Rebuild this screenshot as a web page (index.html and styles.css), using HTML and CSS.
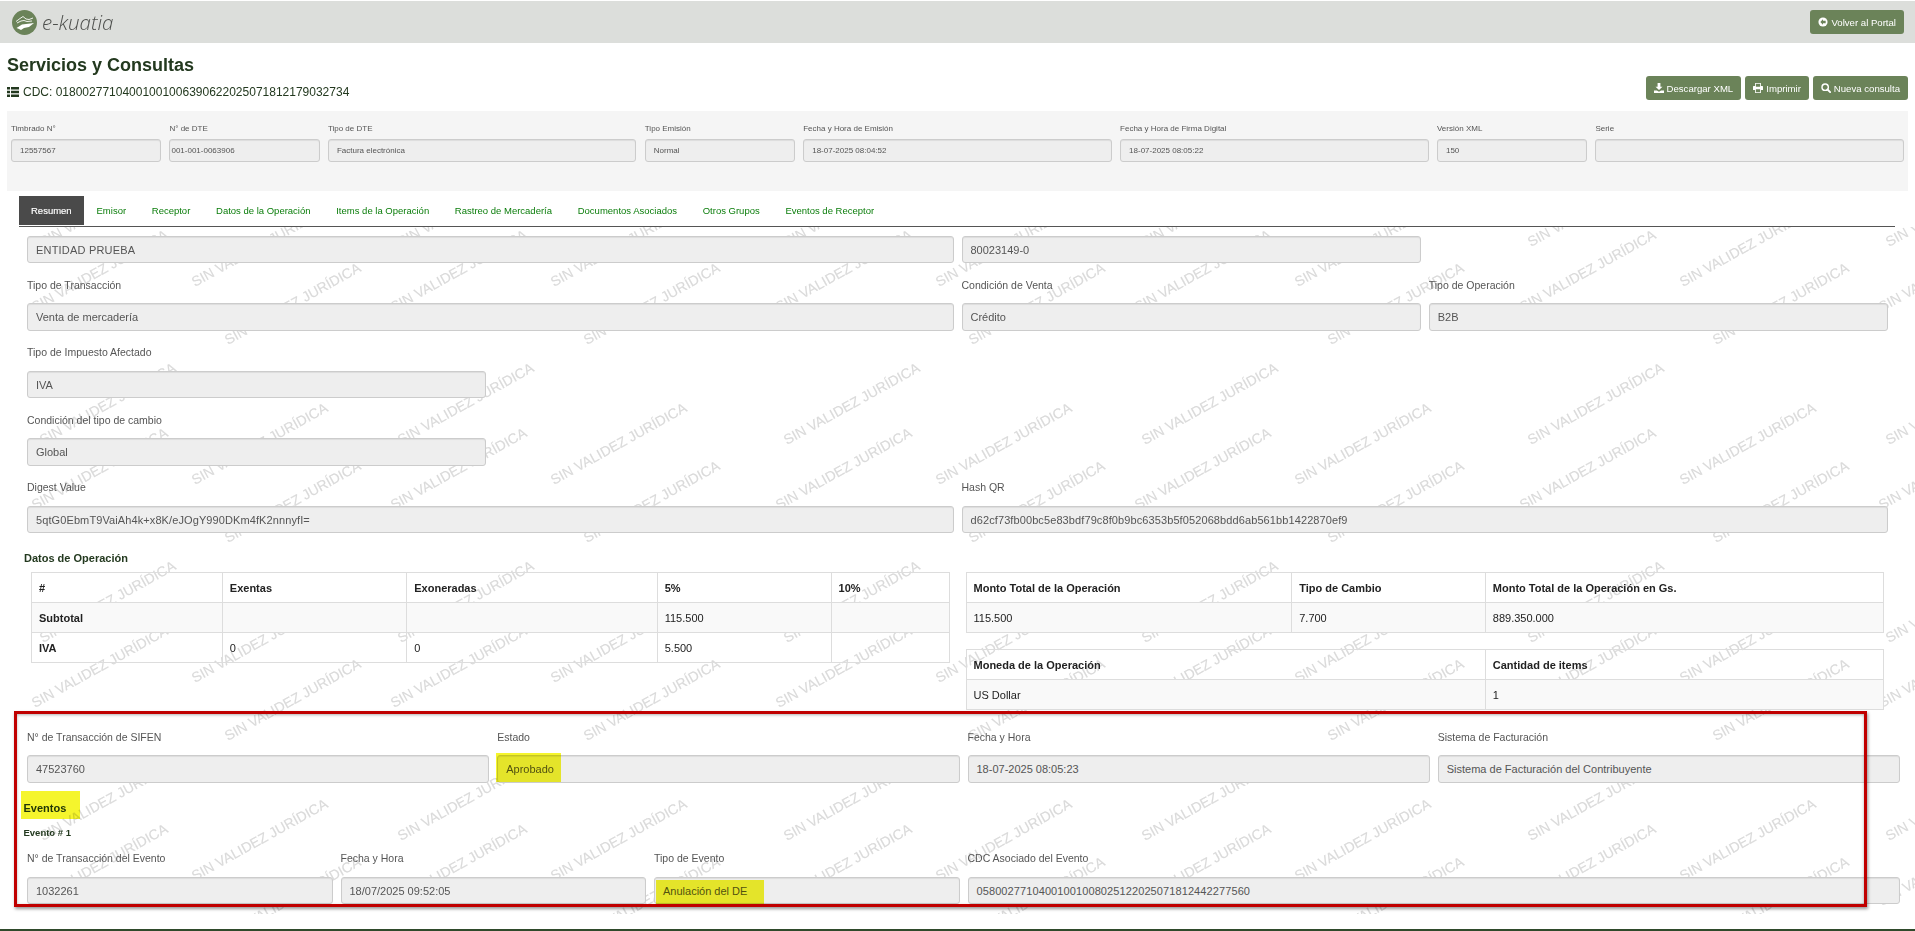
FILE: index.html
```html
<!DOCTYPE html>
<html lang="es">
<head>
<meta charset="utf-8">
<title>e-Kuatia</title>
<link rel="stylesheet" href="styles.css">
</head>
<body>
<header class="topbar">
  <div class="brand">
    <svg class="brand-mark" viewBox="0 0 25 25"><circle cx="12.500" cy="12.500" r="12.500" fill="#6b8359"/><path d="M4 11.500 8 8.500 11 6.500 14 9 17 9.500 21 8M5 13 9 11 12 10.500 15 11.500 20 11" fill="none" stroke="#fff" stroke-width=".9"/><path d="M4.500 18 10 14.500 22 13 17 17 12 18 9 20 7 19Z" fill="#fff"/></svg>
    <span class="brand-name">e-kuatia</span>
  </div>
  <a class="btn">
    <svg class="ico" viewBox="0 0 12 12"><circle cx="6" cy="6" r="5.500" fill="#fff"/><path d="M6 2.800 2.800 6 6 9.200V7.400h3.200V4.600H6Z" fill="#6b8359"/></svg>
    Volver al Portal
  </a>
</header>

<section class="page-head">
  <div class="page-titles">
    <h1 class="title">Servicios y Consultas</h1>
    <div class="cdc">
      <svg class="cdc-ico" viewBox="0 0 12 10"><path d="M0 0h3v2.600H0zM4 0h8v2.600H4zM0 3.700h3v2.600H0zM4 3.700h8v2.600H4zM0 7.400h3V10H0zM4 7.400h8V10H4z" fill="#23391f"/></svg>
      <span>CDC: 01800277104001001006390622025071812179032734</span>
    </div>
  </div>
  <div class="actions">
    <a class="btn">
      <svg class="ico" viewBox="0 0 12 12"><path d="M4.300 0h3.400v4.500h2.500L6 8.500 1.800 4.500h2.500ZM0 9h3.500L6 10.500 8.500 9H12v3H0Z" fill="#fff"/></svg>
      Descargar XML
    </a>
    <a class="btn">
      <svg class="ico" viewBox="0 0 12 12"><path fill-rule="evenodd" d="M2.500 0h7v3.500h1.700c.5 0 .8.400.8.800v4.200H9.500V12h-7V8.500H0V4.300c0-.4.300-.8.800-.8h1.700ZM3.500 1v3.500h5V1ZM3.500 7.500V11h5V7.500Z" fill="#fff"/></svg>
      Imprimir
    </a>
    <a class="btn">
      <svg class="ico" viewBox="0 0 12 12"><circle cx="5" cy="5" r="3.800" fill="none" stroke="#fff" stroke-width="1.700"/><path d="M7.800 7.800 11 11" stroke="#fff" stroke-width="2.200" stroke-linecap="round"/></svg>
      Nueva consulta
    </a>
  </div>
</section>

<section class="summary">
  <div class="f s1"><div class="mini-label">Timbrado N°</div><div class="mini-input">12557567</div></div>
  <div class="f s1"><div class="mini-label">N° de DTE</div><div class="mini-input flush">001-001-0063906</div></div>
  <div class="f s2"><div class="mini-label">Tipo de DTE</div><div class="mini-input">Factura electrónica</div></div>
  <div class="f s1"><div class="mini-label">Tipo Emisión</div><div class="mini-input">Normal</div></div>
  <div class="f s2"><div class="mini-label">Fecha y Hora de Emisión</div><div class="mini-input">18-07-2025 08:04:52</div></div>
  <div class="f s2"><div class="mini-label">Fecha y Hora de Firma Digital</div><div class="mini-input">18-07-2025 08:05:22</div></div>
  <div class="f s1"><div class="mini-label">Versión XML</div><div class="mini-input">150</div></div>
  <div class="f s2"><div class="mini-label">Serie</div><div class="mini-input"></div></div>
</section>

<nav class="tabs">
  <a class="tab active">Resumen</a>
  <a class="tab">Emisor</a>
  <a class="tab">Receptor</a>
  <a class="tab">Datos de la Operación</a>
  <a class="tab">Items de la Operación</a>
  <a class="tab">Rastreo de Mercadería</a>
  <a class="tab">Documentos Asociados</a>
  <a class="tab">Otros Grupos</a>
  <a class="tab">Eventos de Receptor</a>
</nav>

<main class="content">
  <svg class="watermark" viewBox="0 227 1915 687">
    <defs>
      <g id="wm-tile">
        <text class="wm-text" transform="translate(43 247) rotate(-29)">SIN VALIDEZ JURÍDICA</text>
        <text class="wm-text" transform="translate(401 247) rotate(-29)">SIN VALIDEZ JURÍDICA</text>
        <text class="wm-text" transform="translate(195 287) rotate(-29)">SIN VALIDEZ JURÍDICA</text>
        <text class="wm-text" transform="translate(554 287) rotate(-29)">SIN VALIDEZ JURÍDICA</text>
        <text class="wm-text" transform="translate(35 312) rotate(-29)">SIN VALIDEZ JURÍDICA</text>
        <text class="wm-text" transform="translate(394 312) rotate(-29)">SIN VALIDEZ JURÍDICA</text>
        <text class="wm-text" transform="translate(228 345) rotate(-29)">SIN VALIDEZ JURÍDICA</text>
        <text class="wm-text" transform="translate(587 345) rotate(-29)">SIN VALIDEZ JURÍDICA</text>
      </g>
    </defs>
    <use href="#wm-tile"/><use href="#wm-tile" x="744"/><use href="#wm-tile" x="1488"/>
    <use href="#wm-tile" y="198"/><use href="#wm-tile" x="744" y="198"/><use href="#wm-tile" x="1488" y="198"/>
    <use href="#wm-tile" y="396"/><use href="#wm-tile" x="744" y="396"/><use href="#wm-tile" x="1488" y="396"/>
    <use href="#wm-tile" y="594"/><use href="#wm-tile" x="744" y="594"/><use href="#wm-tile" x="1488" y="594"/>
  </svg>

  <div class="form-area">
    <div class="row first">
      <div class="s6"><div class="input spaced">ENTIDAD PRUEBA</div></div>
      <div class="s3"><div class="input">80023149-0</div></div>
    </div>
    <div class="row">
      <div class="s6"><label class="label">Tipo de Transacción</label><div class="input">Venta de mercadería</div></div>
      <div class="s3"><label class="label">Condición de Venta</label><div class="input">Crédito</div></div>
      <div class="s3"><label class="label">Tipo de Operación</label><div class="input">B2B</div></div>
    </div>
    <div class="row">
      <div class="s3"><label class="label">Tipo de Impuesto Afectado</label><div class="input">IVA</div></div>
    </div>
    <div class="row">
      <div class="s3"><label class="label">Condición del tipo de cambio</label><div class="input">Global</div></div>
    </div>
    <div class="row">
      <div class="s6"><label class="label">Digest Value</label><div class="input code">5qtG0EbmT9VaiAh4k+x8K/eJOgY990DKm4fK2nnnyfI=</div></div>
      <div class="s6"><label class="label">Hash QR</label><div class="input code">d62cf73fb00bc5e83bdf79c8f0b9bc6353b5f052068bdd6ab561bb1422870ef9</div></div>
    </div>

    <h3 class="section-title">Datos de Operación</h3>
    <div class="tables">
      <div class="tables-col">
        <table class="tbl">
          <colgroup><col class="c208"><col class="c201"><col class="c273"><col class="c1895"><col class="c1285"></colgroup>
          <tr><th>#</th><th>Exentas</th><th>Exoneradas</th><th>5%</th><th>10%</th></tr>
          <tr class="striped"><th>Subtotal</th><td></td><td></td><td>115.500</td><td></td></tr>
          <tr><th>IVA</th><td>0</td><td>0</td><td>5.500</td><td></td></tr>
        </table>
      </div>
      <div class="tables-col">
        <table class="tbl">
          <colgroup><col class="c355"><col class="c211"><col class="c434"></colgroup>
          <tr><th>Monto Total de la Operación</th><th>Tipo de Cambio</th><th>Monto Total de la Operación en Gs.</th></tr>
          <tr class="striped"><td>115.500</td><td>7.700</td><td>889.350.000</td></tr>
        </table>
        <table class="tbl tbl-second">
          <colgroup><col class="c566"><col class="c434"></colgroup>
          <tr><th>Moneda de la Operación</th><th>Cantidad de items</th></tr>
          <tr class="striped"><td>US Dollar</td><td>1</td></tr>
        </table>
      </div>
    </div>

    <div class="row wide after-tables">
      <div class="s3"><label class="label">N° de Transacción de SIFEN</label><div class="input">47523760</div></div>
      <div class="s3"><label class="label">Estado</label><div class="input">Aprobado<span class="mark mark-estado"></span></div></div>
      <div class="s3"><label class="label">Fecha y Hora</label><div class="input">18-07-2025 08:05:23</div></div>
      <div class="s3"><label class="label">Sistema de Facturación</label><div class="input">Sistema de Facturación del Contribuyente</div></div>
    </div>

    <h3 class="events-title">Eventos<span class="mark mark-eventos"></span></h3>
    <h4 class="event-title">Evento # 1</h4>
    <div class="row wide event-row">
      <div class="s2"><label class="label">N° de Transacción del Evento</label><div class="input">1032261</div></div>
      <div class="s2"><label class="label">Fecha y Hora</label><div class="input">18/07/2025 09:52:05</div></div>
      <div class="s2"><label class="label">Tipo de Evento</label><div class="input">Anulación del DE<span class="mark mark-tipo"></span></div></div>
      <div class="s6"><label class="label">CDC Asociado del Evento</label><div class="input code">05800277104001001008025122025071812442277560</div></div>
    </div>
  </div>

  <div class="red-box"></div>
</main>
<footer class="foot"></footer>
</body>
</html>
```
FILE: styles.css
```css
* { box-sizing: border-box; }
html, body { margin: 0; height: 931px; overflow: hidden; background: #fff; }
body { font-family: "Liberation Sans", Arial, sans-serif; color: #333; }

.topbar { margin-top: 1px; height: 42px; background: #dcdedb; display: flex; align-items: center; justify-content: space-between; padding: 0 11px 0 12px; }
.brand { display: flex; align-items: center; gap: 5px; }
.brand-mark { width: 25px; height: 25px; display: block; }
.brand-name { font-family: "Open Sans", sans-serif; font-style: italic; font-weight: 300; font-size: 20.5px; color: #4d4f4c; line-height: 25px; }

.btn { display: inline-flex; align-items: center; justify-content: center; gap: 3px; height: 24px; padding: 0 8px; background: #6b8359; color: #fff; font-size: 9.6px; border-radius: 3px; white-space: nowrap; }
.ico { width: 10px; height: 10px; display: block; flex: none; }

.page-head { height: 68px; padding: 0 7px; display: flex; justify-content: space-between; align-items: flex-end; }
.page-titles { align-self: flex-start; padding-top: 12px; }
.title { margin: 0; font-size: 18px; line-height: 20px; font-weight: 700; color: #23391f; }
.cdc { margin-top: 10px; display: flex; align-items: center; gap: 4px; font-size: 12px; line-height: 14px; color: #23391f; }
.cdc-ico { width: 12px; height: 10px; display: block; }
.actions { display: flex; gap: 4px; margin-bottom: 11px; }

.summary { margin: 0 7px; height: 80px; background: #f5f5f5; padding: 12px 4px 0; display: grid; grid-template-columns: repeat(12, 1fr); column-gap: 8.3px; align-content: start; }
.s1 { grid-column: span 1; min-width: 0; }
.s2 { grid-column: span 2; min-width: 0; position: relative; }
.s3 { grid-column: span 3; min-width: 0; }
.s6 { grid-column: span 6; min-width: 0; }
.mini-label { font-size: 8px; line-height: 12px; margin-bottom: 4px; color: #555; white-space: nowrap; }
.mini-input { height: 23px; line-height: 21px; font-size: 8px; padding: 0 8px; background: #eee; border: 1px solid #ccc; border-radius: 3px; color: #555; box-shadow: inset 0 1px 1px rgba(0,0,0,.075); }
.mini-input.flush { padding: 0 1px; }

.tabs { margin: 5px 20px 0 19px; height: 31px; border-bottom: 1px solid #555; display: flex; align-items: flex-start; }
.tab { height: 29px; line-height: 29px; padding: 0 12.85px; font-size: 9.5px; color: #0a7d0a; white-space: nowrap; }
.tab.active { padding: 0 12px; background: #4a4a4a; color: #fff; -webkit-text-stroke: .15px #fff; }

.content { position: relative; height: 687px; }
.watermark { position: absolute; left: 0; top: 0; width: 1915px; height: 687px; display: block; }
.wm-text { font-family: "Liberation Sans", Arial, sans-serif; font-size: 14px; fill: #dadada; stroke: #dadada; stroke-width: .15px; }
.form-area { position: relative; padding: 8.5px 27px 0; }

.row { display: grid; grid-template-columns: repeat(12, 1fr); column-gap: 8px; margin-top: 15.5px; }
.row.first { margin-top: 0; }
.row.wide { margin-right: -12px; }
.label { display: block; font-size: 10.5px; line-height: 12px; margin-bottom: 12.5px; color: #555; white-space: nowrap; }
.input { position: relative; height: 27.5px; line-height: 26.5px; padding: 0 8px; font-size: 11px; color: #555; background: #eee; border: 1px solid #ccc; border-radius: 3px; box-shadow: inset 0 1px 1px rgba(0,0,0,.075); white-space: nowrap; overflow: visible; }
.input.spaced { letter-spacing: .2px; }
.input.code { letter-spacing: .1px; }

.section-title { margin: 18px 0 7px -3px; font-size: 11px; line-height: 14px; font-weight: 700; color: #23391f; }
.tables { display: flex; gap: 16px; padding: 0 4px; }
.tables-col { flex: 1 1 0; min-width: 0; }
.tbl { width: 100%; table-layout: fixed; border-collapse: collapse; font-size: 11px; color: #222; }
.tbl th, .tbl td { height: 30px; padding: 0 7px; border: 1px solid #ddd; text-align: left; white-space: nowrap; }
.tbl th { font-weight: 700; }
.tbl td { font-weight: 400; }
.striped { background: #f9f9f9; }
.tbl-second { margin-top: 16px; }
.c208 { width: 20.8%; } .c201 { width: 20.1%; } .c273 { width: 27.3%; } .c1895 { width: 18.95%; } .c1285 { width: 12.85%; }
.c355 { width: 35.5%; } .c211 { width: 21.1%; } .c434 { width: 43.4%; } .c566 { width: 56.6%; }

.after-tables { margin-top: 20.5px; }
.events-title { position: relative; margin: 18px 0 0 -3.5px; font-size: 11px; line-height: 14px; font-weight: 700; color: #23391f; }
.event-title { margin: 12px 0 0 -3.5px; font-size: 9.5px; line-height: 12px; font-weight: 700; color: #23391f; }
.event-row { margin-top: 13.5px; }

.mark { position: absolute; background: #f5f52d; mix-blend-mode: multiply; }
.mark-estado { left: -2px; top: -3px; width: 65px; height: 29px; }
.mark-tipo { left: 1px; top: 2px; width: 108px; height: 25px; }
.mark-eventos { left: -2.500px; top: -9.500px; width: 59px; height: 28px; }

.red-box { position: absolute; left: 14px; top: 484px; width: 1853px; height: 196px; border: 3px solid #c00000; box-shadow: 1px 2px 3px rgba(0,0,0,.4), inset 0 1px 3px rgba(0,0,0,.3); pointer-events: none; }
.foot { margin-top: 15px; height: 2px; background: #2f4a2b; }
```
